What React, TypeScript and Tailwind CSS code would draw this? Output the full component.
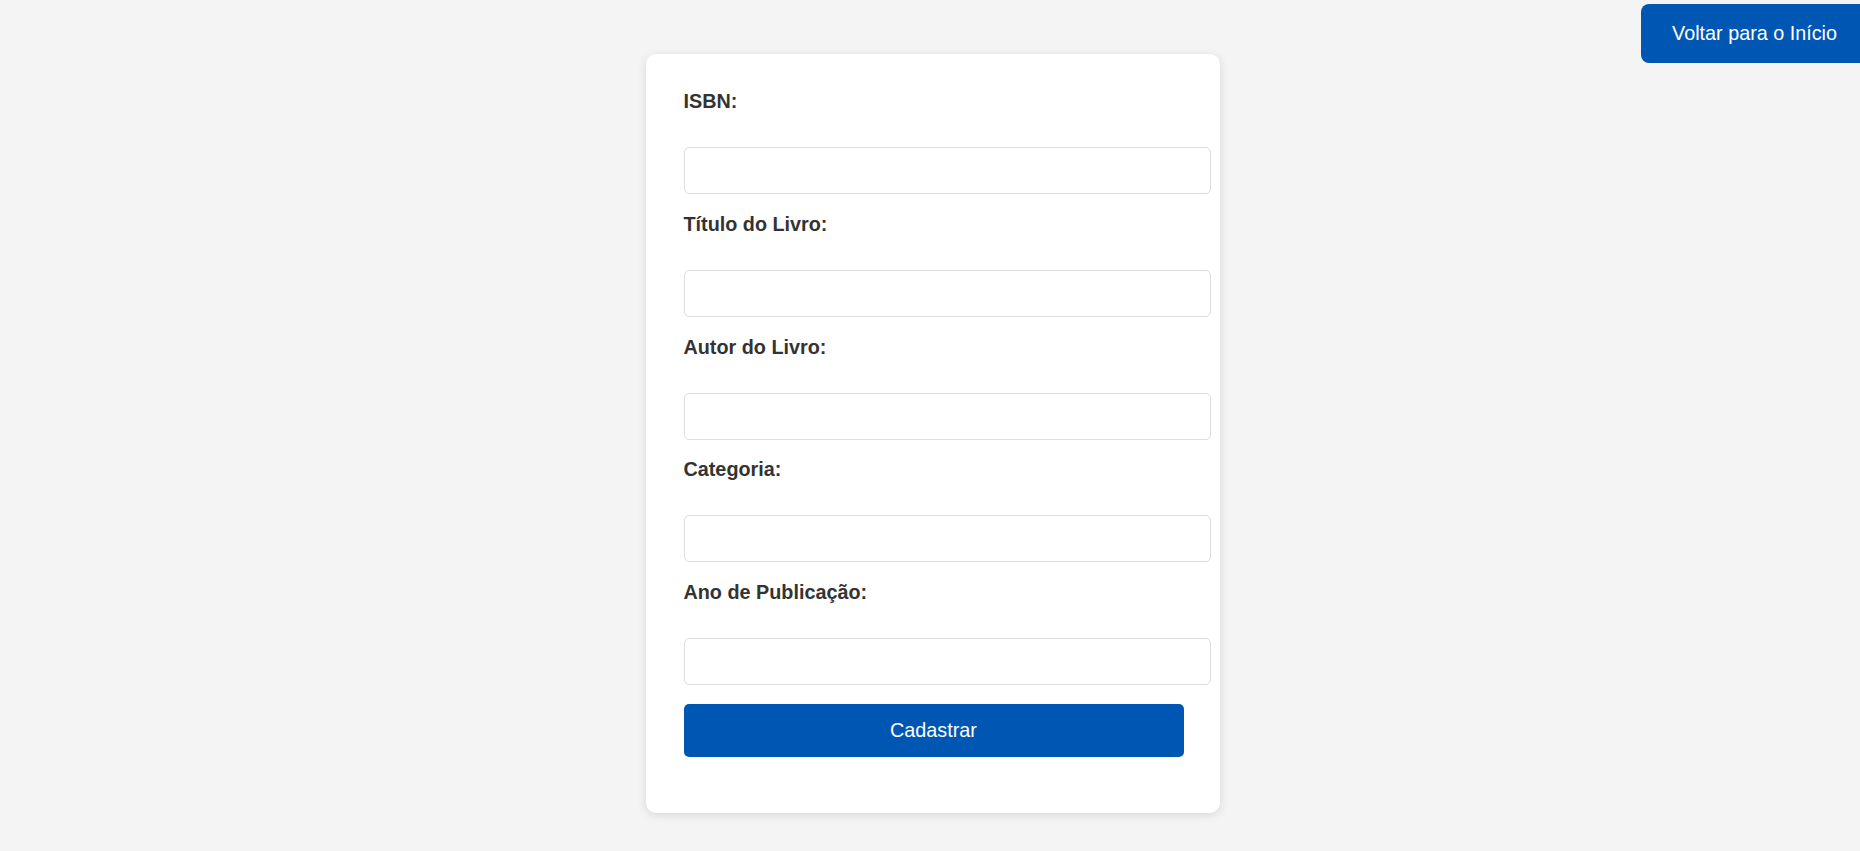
import React from 'react';

const fields = [
  { id: 'isbn', label: 'ISBN:' },
  { id: 'titulo', label: 'Título do Livro:' },
  { id: 'autor', label: 'Autor do Livro:' },
  { id: 'categoria', label: 'Categoria:' },
  { id: 'ano', label: 'Ano de Publicação:' },
];

export default function App() {
  return (
    <div className="relative min-h-screen overflow-hidden bg-[#f4f4f4] pt-[54px] flex justify-center font-['Liberation_Sans',Arial,sans-serif]">
      <a
        href="#"
        className="absolute top-[4px] right-[-8px] h-[59px] px-[31px] flex items-center rounded-[8px] bg-[#0056b3] text-white text-[19.8px]"
      >
        Voltar para o Início
      </a>

      <form className="ml-[5px] w-[574px] h-fit bg-white rounded-[10px] shadow-[0_2px_10px_rgba(0,0,0,0.12)] pt-[36px] pl-[38px] pr-[36px] pb-[56px]">
        {fields.map((f) => (
          <div key={f.id}>
            <label htmlFor={f.id} className="block h-[23px] leading-[23px] mb-[34px] text-[19.8px] font-bold text-[#333]">
              {f.label}
            </label>
            <input
              id={f.id}
              type="text"
              className="block w-[527px] h-[47px] mb-[18.8px] px-[12px] border border-[#ddd] rounded-[5px] bg-white outline-none"
            />
          </div>
        ))}
        <button
          type="submit"
          className="block mt-[1.6px] w-[500px] h-[53px] rounded-[5px] bg-[#0056b3] text-white text-[19.8px]"
        >
          Cadastrar
        </button>
      </form>
    </div>
  );
}
